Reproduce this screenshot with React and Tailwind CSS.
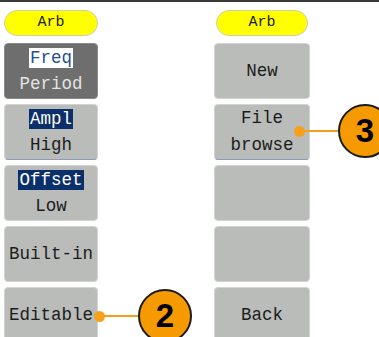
const Btn = ({ dark, line, children }) => (
  <div
    className={`h-[56px] rounded-[4px] border flex flex-col items-center justify-center text-[17.5px] leading-[27px] ${
      dark
        ? "bg-[#6e6e6e] border-[#8a8a8a] text-[#e4e4e4]"
        : "bg-[#b9bcb8] border-[#d2d4d1] text-[#1c1c1c]"
    } ${line ? "border-b-[#8d9cb8]" : ""}`}
  >
    {children}
  </div>
);

const Pill = ({ className }) => (
  <div
    className={`h-[26px] rounded-full bg-[#ffff00] border border-[#cfcfb0] flex items-center justify-center text-[15px] text-[#1c1c1c] ${className}`}
  >
    Arb
  </div>
);

const Callout = ({ n, dotX, y, cx }) => (
  <>
    <div
      className="absolute h-[2px] bg-[#f5a01a]"
      style={{ left: dotX, top: y - 1, width: cx - 27 - dotX }}
    />
    <div
      className="absolute w-[11px] h-[11px] rounded-full bg-[#f7a01c]"
      style={{ left: dotX - 5, top: y - 5 }}
    />
    <div
      className="absolute w-[54px] h-[54px] rounded-full bg-[#f59b00] border-2 border-[#1a1a1a] flex items-center justify-center font-['Liberation_Sans'] font-bold text-[33px] text-black"
      style={{ left: cx - 27, top: y - 27 }}
    >
      {n}
    </div>
  </>
);

export default function App() {
  return (
    <div className="relative w-[379px] h-[337px] bg-white overflow-hidden font-['Liberation_Mono',monospace]">
      <div className="h-[2px] bg-[#3a3a3a]" />
      <div className="flex pt-[8px]">
        <div className="ml-[4px] w-[94px] flex flex-col">
          <Pill className="" />
          <div className="mt-[7px] flex flex-col gap-[5px]">
            <Btn dark>
              <span className="bg-white text-[#1f4f8f] px-[1px] leading-[20px]">Freq</span>
              <span className="mt-[6px] leading-[20px]">Period</span>
            </Btn>
            <Btn line>
              <span className="bg-[#0b2f6b] text-white px-[1px] leading-[20px]">Ampl</span>
              <span className="mt-[6px] leading-[20px]">High</span>
            </Btn>
            <Btn>
              <span className="bg-[#0b2f6b] text-white px-[1px] leading-[20px]">Offset</span>
              <span className="mt-[6px] leading-[20px]">Low</span>
            </Btn>
            <Btn>Built-in</Btn>
            <Btn>Editable</Btn>
          </div>
        </div>
        <div className="ml-[116px] w-[96px] flex flex-col">
          <Pill className="mx-[2px]" />
          <div className="mt-[7px] flex flex-col gap-[5px]">
            <Btn>New</Btn>
            <Btn line>
              <span>File</span>
              <span>browse</span>
            </Btn>
            <Btn />
            <Btn />
            <Btn>Back</Btn>
          </div>
        </div>
      </div>
      <Callout n="2" dotX={99} y={316} cx={165} />
      <Callout n="3" dotX={299} y={131} cx={365} />
    </div>
  );
}
